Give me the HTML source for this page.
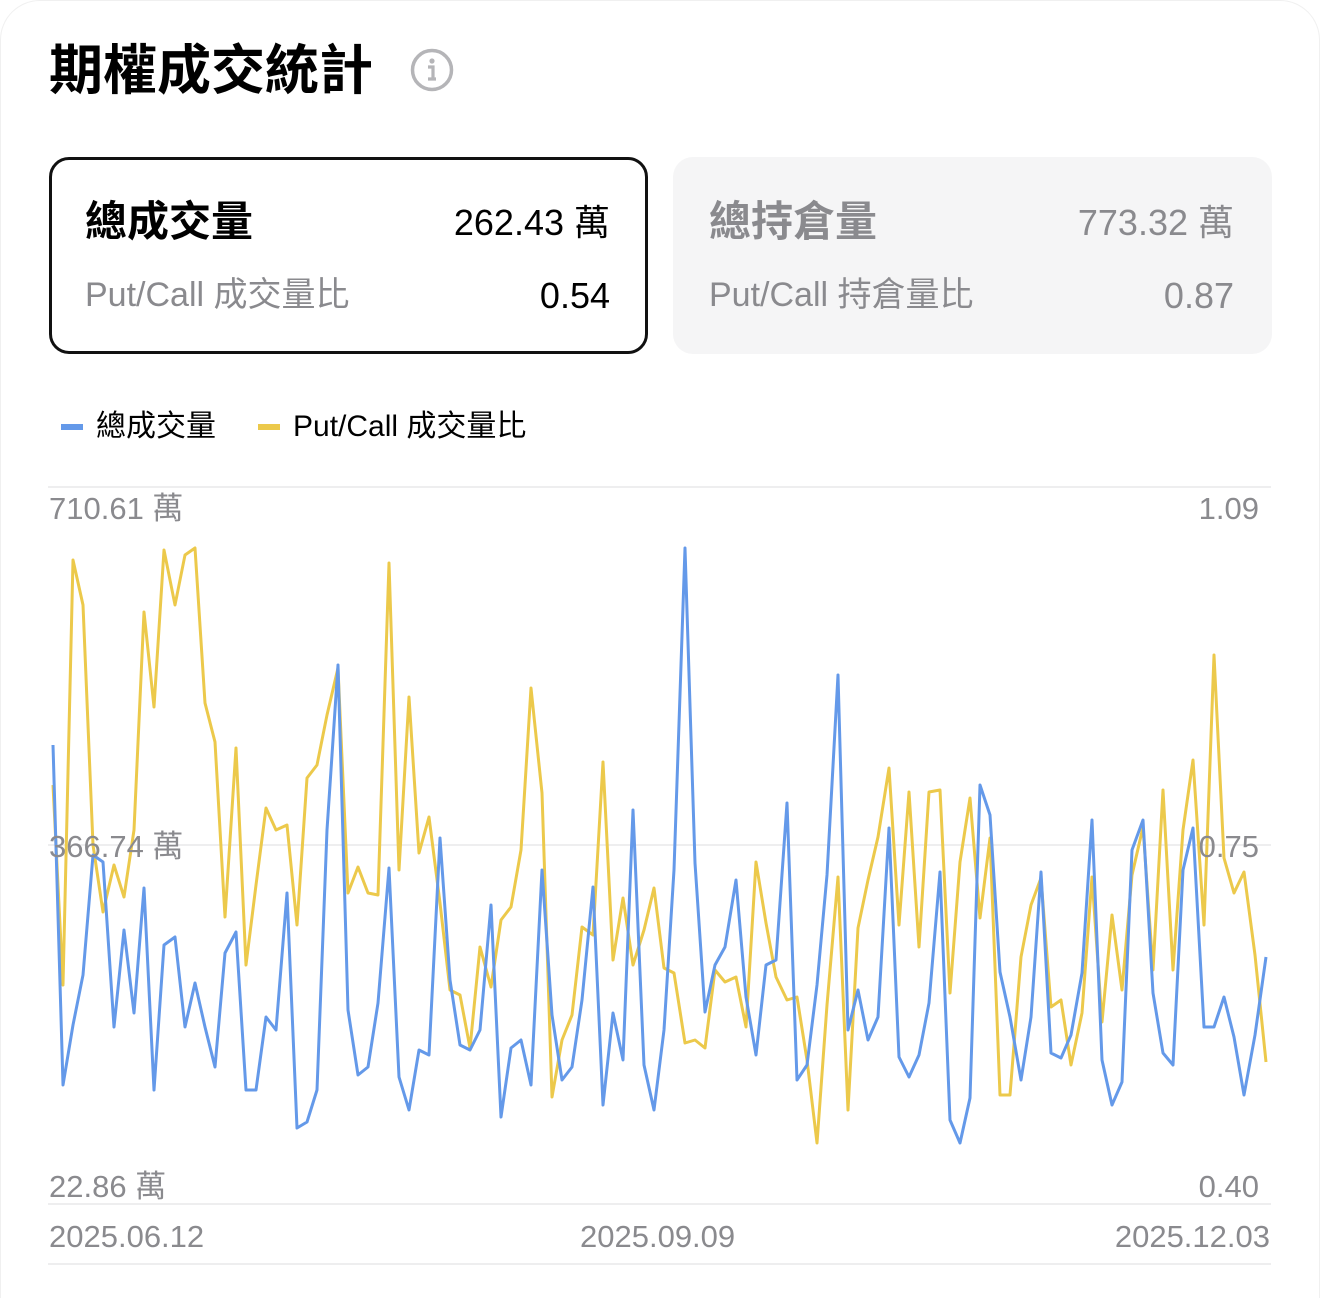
<!DOCTYPE html>
<html><head><meta charset="utf-8"><style>
*{margin:0;padding:0;box-sizing:border-box}
body{width:1320px;height:1298px;background:#fff;font-family:"Liberation Sans","Noto Sans CJK TC",sans-serif;position:relative;overflow:hidden;color:#000}
.a{position:absolute;white-space:nowrap}
.card{position:absolute;top:157px;width:599px;height:197px;border-radius:20px}
.g{color:#8a8a8e}
.ax{font-size:31px;line-height:36px}
</style></head><body>
<div class="a" style="left:0;top:0;width:1320px;height:1298px;border-radius:40px 40px 0 0;border:1px solid #f0f0f0;border-bottom:none"></div>
<div class="a" style="left:49px;top:38px;font-size:54px;font-weight:bold;line-height:66px">期權成交統計</div>
<svg class="a" style="left:410px;top:48px" width="44" height="44" viewBox="0 0 44 44"><circle cx="22" cy="22" r="19.5" fill="none" stroke="#b5b5b8" stroke-width="3.5"/><circle cx="22" cy="13" r="2.6" fill="#b5b5b8"/><path d="M18 19h5v12M18 31h8" fill="none" stroke="#b5b5b8" stroke-width="3.2"/></svg>

<div class="card" style="left:49px;border:3px solid #111"></div>
<div class="a" style="left:85px;top:197px;font-size:42px;font-weight:bold;line-height:50px">總成交量</div>
<div class="a" style="right:710px;top:202px;font-size:36px;line-height:42px">262.43 萬</div>
<div class="a g" style="left:85px;top:275px;font-size:34px;line-height:40px">Put/Call 成交量比</div>
<div class="a" style="right:710px;top:275px;font-size:36px;line-height:42px">0.54</div>

<div class="card" style="left:673px;background:#f5f5f6"></div>
<div class="a g" style="left:709px;top:197px;font-size:42px;font-weight:bold;line-height:50px">總持倉量</div>
<div class="a g" style="right:86px;top:202px;font-size:36px;line-height:42px">773.32 萬</div>
<div class="a g" style="left:709px;top:275px;font-size:34px;line-height:40px">Put/Call 持倉量比</div>
<div class="a g" style="right:86px;top:275px;font-size:36px;line-height:42px">0.87</div>

<div class="a" style="left:61px;top:424px;width:22px;height:6px;background:#6499e9"></div>
<div class="a" style="left:96px;top:409px;font-size:30px;line-height:36px">總成交量</div>
<div class="a" style="left:258px;top:424px;width:22px;height:6px;background:#ecc94b"></div>
<div class="a" style="left:293px;top:409px;font-size:30px;line-height:36px">Put/Call 成交量比</div>

<svg class="a" style="left:0;top:0" width="1320" height="1298">
<g stroke="#e8e8ea" stroke-width="1.5"><line x1="48" y1="487" x2="1271" y2="487"/><line x1="48" y1="845" x2="1271" y2="845"/><line x1="48" y1="1204" x2="1271" y2="1204"/><line x1="48" y1="1264" x2="1271" y2="1264"/></g>
<polyline fill="none" stroke="#ecc94b" stroke-width="3" stroke-linejoin="round" points="53,785 63,985 73,560 83,605 93,845 103,912 114,865 124,897 134,830 144,612 154,707 164,550 175,605 185,555 195,548 205,703 215,742 225,917 236,748 246,965 256,885 266,808 276,830 287,825 297,925 307,778 317,765 327,715 338,668 348,893 358,867 368,893 378,895 389,563 399,870 409,697 419,853 429,817 440,903 450,990 460,995 470,1048 480,947 491,987 501,920 511,907 521,850 531,688 542,793 552,1097 562,1040 572,1015 582,927 593,935 603,762 613,960 623,898 633,965 644,930 654,888 664,968 674,973 685,1043 695,1040 705,1048 715,970 725,982 736,977 746,1027 756,862 766,923 776,977 787,1000 797,997 807,1060 817,1143 827,1005 838,877 848,1110 858,928 868,880 878,837 889,768 899,925 909,792 919,947 929,792 940,790 950,993 960,862 970,798 980,918 990,838 1000,1095 1010,1095 1021,957 1031,905 1041,878 1051,1007 1061,1000 1071,1065 1082,1013 1092,877 1102,1022 1112,915 1122,990 1132,875 1143,827 1153,970 1163,790 1173,970 1183,830 1193,760 1204,925 1214,655 1224,858 1234,893 1244,872 1255,955 1266,1062"/>
<polyline fill="none" stroke="#6499e9" stroke-width="3" stroke-linejoin="round" points="53,745 63,1085 73,1025 83,975 93,855 103,862 114,1027 124,930 134,1013 144,888 154,1090 164,945 175,937 185,1027 195,983 205,1027 215,1067 225,953 236,932 246,1090 256,1090 266,1017 276,1030 287,893 297,1128 307,1122 317,1090 327,830 338,665 348,1010 358,1075 368,1067 378,1003 389,868 399,1077 409,1110 419,1050 429,1055 440,838 450,980 460,1045 470,1050 480,1030 491,905 501,1117 511,1048 521,1040 531,1085 542,870 552,1015 562,1080 572,1067 582,1000 593,887 603,1105 613,1013 623,1060 633,810 644,1065 654,1110 664,1030 674,870 685,548 695,863 705,1012 715,965 725,947 736,880 746,997 756,1055 766,965 776,960 787,803 797,1080 807,1065 817,985 827,875 838,675 848,1030 858,990 868,1040 878,1017 889,828 899,1057 909,1077 919,1055 929,1003 940,872 950,1120 960,1143 970,1098 980,785 990,815 1000,972 1010,1017 1021,1080 1031,1017 1041,872 1051,1053 1061,1058 1071,1035 1082,973 1092,820 1102,1060 1112,1105 1122,1082 1132,850 1143,820 1153,993 1163,1053 1173,1065 1183,870 1193,828 1204,1027 1214,1027 1224,997 1234,1037 1244,1095 1255,1035 1266,957"/>
</svg>

<div class="a g ax" style="left:49px;top:491px">710.61 萬</div>
<div class="a g ax" style="left:49px;top:829px">366.74 萬</div>
<div class="a g ax" style="left:49px;top:1169px">22.86 萬</div>
<div class="a g ax" style="right:61px;top:491px">1.09</div>
<div class="a g ax" style="right:61px;top:829px">0.75</div>
<div class="a g ax" style="right:61px;top:1169px">0.40</div>
<div class="a g ax" style="left:49px;top:1219px">2025.06.12</div>
<div class="a g ax" style="left:580px;top:1219px">2025.09.09</div>
<div class="a g ax" style="right:50px;top:1219px">2025.12.03</div>
</body></html>
